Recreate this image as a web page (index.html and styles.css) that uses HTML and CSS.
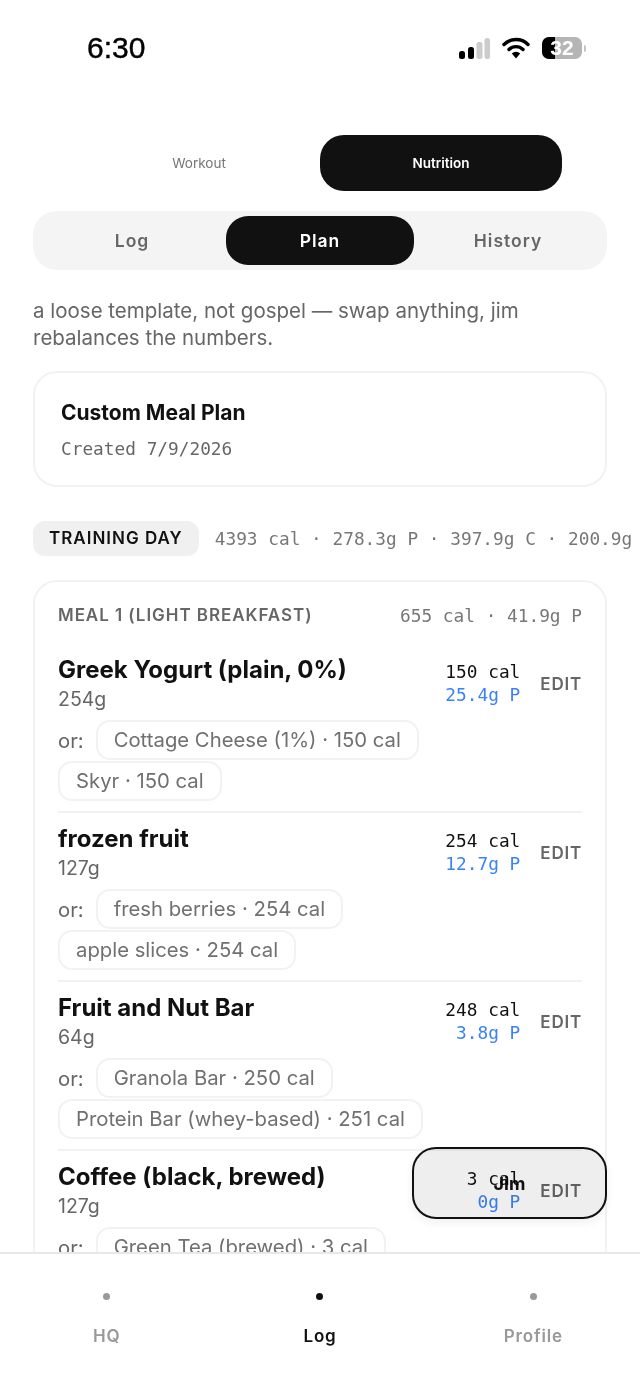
FILE: index.html
```html
<!DOCTYPE html>
<html lang="en">
<head>
    <meta charset="UTF-8">
    <meta name="viewport" content="width=device-width, initial-scale=1.0">
    <title>Nutrition Plan</title>
    <link rel="stylesheet" href="styles.css">
</head>
<body>

<div class="screen">
    <!-- Status bar -->
    <div class="status-bar">
        <span class="status-time">6:30</span>
        <div class="status-icons">
            <svg class="icon-signal" width="31" height="21" viewBox="0 0 31 21">
                <rect x="0" y="13" width="6" height="8" rx="2.5" fill="#000"/>
                <rect x="9" y="9" width="6" height="12" rx="2.5" fill="#000"/>
                <rect x="17.5" y="4" width="6" height="17" rx="2.5" fill="#ccc"/>
                <rect x="25.5" y="0" width="5.5" height="21" rx="2.5" fill="#ccc"/>
            </svg>
            <svg class="icon-wifi" width="28" height="22" viewBox="0 0 28 22">
                <path d="M2 7.5 a17 17 0 0 1 24 0" fill="none" stroke="#000" stroke-width="3.4" stroke-linecap="round"/>
                <path d="M7 12.5 a10 10 0 0 1 14 0" fill="none" stroke="#000" stroke-width="3.4" stroke-linecap="round"/>
                <path d="M9.8 16.4 L14 21.5 L18.2 16.4 a6 6 0 0 0 -8.4 0z" fill="#000"/>
            </svg>
            <div class="battery">
                <div class="battery-body">
                    <div class="battery-fill"></div>
                    <span class="battery-num">32</span>
                </div>
                <div class="battery-cap"></div>
            </div>
        </div>
    </div>

    <main class="content">
        <!-- Workout / Nutrition -->
        <div class="mode-tabs">
            <div class="mode-tab">Workout</div>
            <div class="mode-tab active">Nutrition</div>
        </div>

        <!-- Log / Plan / History -->
        <div class="sub-tabs">
            <div class="sub-tab">Log</div>
            <div class="sub-tab active">Plan</div>
            <div class="sub-tab">History</div>
        </div>

        <p class="intro">a loose template, not gospel — swap anything, jim rebalances the numbers.</p>

        <div class="plan-card">
            <div class="plan-title">Custom Meal Plan</div>
            <div class="plan-date">Created 7/9/2026</div>
        </div>

        <div class="day-row">
            <span class="day-badge">TRAINING DAY</span>
            <span class="day-macros">4393 cal · 278.3g P · 397.9g C · 200.9g F</span>
        </div>

        <div class="meal-card">
            <div class="meal-header">
                <span class="meal-name">MEAL 1 (LIGHT BREAKFAST)</span>
                <span class="meal-macros">655 cal · 41.9g P</span>
            </div>

            <div class="food">
                <div class="food-top">
                    <div class="food-info">
                        <div class="food-name">Greek Yogurt (plain, 0%)</div>
                        <div class="food-amount">254g</div>
                    </div>
                    <div class="food-macros">
                        <div>150 cal</div>
                        <div class="protein">25.4g P</div>
                    </div>
                    <span class="edit">EDIT</span>
                </div>
                <div class="swaps">
                    <span class="swap-label">or:</span>
                    <span class="swap">Cottage Cheese (1%) · 150 cal</span>
                    <span class="swap">Skyr · 150 cal</span>
                </div>
            </div>

            <div class="food">
                <div class="food-top">
                    <div class="food-info">
                        <div class="food-name">frozen fruit</div>
                        <div class="food-amount">127g</div>
                    </div>
                    <div class="food-macros">
                        <div>254 cal</div>
                        <div class="protein">12.7g P</div>
                    </div>
                    <span class="edit">EDIT</span>
                </div>
                <div class="swaps">
                    <span class="swap-label">or:</span>
                    <span class="swap">fresh berries · 254 cal</span>
                    <span class="swap">apple slices · 254 cal</span>
                </div>
            </div>

            <div class="food">
                <div class="food-top">
                    <div class="food-info">
                        <div class="food-name">Fruit and Nut Bar</div>
                        <div class="food-amount">64g</div>
                    </div>
                    <div class="food-macros">
                        <div>248 cal</div>
                        <div class="protein">3.8g P</div>
                    </div>
                    <span class="edit">EDIT</span>
                </div>
                <div class="swaps">
                    <span class="swap-label">or:</span>
                    <span class="swap">Granola Bar · 250 cal</span>
                    <span class="swap">Protein Bar (whey-based) · 251 cal</span>
                </div>
            </div>

            <div class="food">
                <div class="food-top">
                    <div class="food-info">
                        <div class="food-name">Coffee (black, brewed)</div>
                        <div class="food-amount">127g</div>
                    </div>
                    <div class="food-macros">
                        <div>3 cal</div>
                        <div class="protein">0g P</div>
                    </div>
                    <span class="edit">EDIT</span>
                </div>
                <div class="swaps">
                    <span class="swap-label">or:</span>
                    <span class="swap">Green Tea (brewed) · 3 cal</span>
                </div>
            </div>
        </div>
    </main>

    <!-- Floating chat button -->
    <div class="jim-button">Jim</div>

    <!-- Bottom nav -->
    <nav class="bottom-nav">
        <div class="nav-item"><span class="nav-dot"></span>HQ</div>
        <div class="nav-item active"><span class="nav-dot"></span>Log</div>
        <div class="nav-item"><span class="nav-dot"></span>Profile</div>
    </nav>
</div>

</body>
</html>
```

FILE: styles.css
```css
* {
    box-sizing: border-box;
}

body {
    margin: 0;
    background-color: #fff;
    font-family: Inter, "Noto Sans", sans-serif;
    color: #111;
}

.screen {
    position: relative;
    display: flex;
    flex-direction: column;
    width: 640px;
    height: 1387px;
    overflow: hidden;
}

/* Status bar */
.status-bar {
    flex: none;
    display: flex;
    justify-content: space-between;
    align-items: center;
    height: 96px;
    padding: 0 54px 0 87px;
}

.status-time {
    font-family: "Liberation Sans", sans-serif;
    font-size: 30px;
    font-weight: 400;
    color: #000;
    -webkit-text-stroke: 0.4px #000;
}

.status-icons {
    display: flex;
    align-items: center;
    gap: 12px;
}

.battery {
    display: flex;
    align-items: center;
    gap: 2px;
}

.battery-body {
    position: relative;
    width: 40px;
    height: 22px;
    border-radius: 7px;
    background-color: #b5b5b5;
    overflow: hidden;
}

.battery-fill {
    width: 13px;
    height: 100%;
    background-color: #000;
}

.battery-num {
    position: absolute;
    top: 0;
    left: 0;
    width: 100%;
    font-family: "Liberation Sans", sans-serif;
    font-size: 21px;
    font-weight: 700;
    line-height: 22px;
    text-align: center;
    color: #fff;
}

.battery-cap {
    width: 2px;
    height: 7px;
    border-radius: 0 2px 2px 0;
    background-color: #c4c4c4;
}

/* Main scroll area */
.content {
    flex: 1;
    min-height: 0;
    padding: 39px 33px 0;
    overflow: hidden;
}

.mode-tabs {
    display: flex;
    width: 484px;
    margin: 0 auto;
}

.mode-tab {
    flex: 1;
    height: 56px;
    line-height: 56px;
    border-radius: 24px;
    text-align: center;
    font-size: 13.5px;
    color: #777;
}

.mode-tab.active {
    background-color: #111;
    color: #fff;
    font-weight: 600;
}

.sub-tabs {
    display: flex;
    height: 59px;
    margin-top: 20px;
    padding: 5px;
    border-radius: 24px;
    background-color: #f4f4f4;
}

.sub-tab {
    flex: 1;
    border-radius: 22px;
    line-height: 50px;
    text-align: center;
    font-size: 17.5px;
    font-weight: 600;
    letter-spacing: 1px;
    color: #666;
}

.sub-tab.active {
    background-color: #111;
    color: #fff;
}

.intro {
    margin: 27px 0 0;
    font-size: 20.5px;
    line-height: 27px;
    color: #666;
}

.plan-card {
    height: 116px;
    margin-top: 20px;
    padding: 27px 26px;
    border: 2px solid #f2f2f2;
    border-radius: 24px;
}

.plan-title {
    font-size: 21px;
    line-height: 26px;
    font-weight: 700;
}

.plan-date {
    margin-top: 12px;
    font-family: "DejaVu Sans Mono", monospace;
    font-size: 17.8px;
    color: #666;
}

.day-row {
    display: flex;
    align-items: center;
    gap: 16px;
    margin-top: 34px;
    white-space: nowrap;
}

.day-badge {
    flex: none;
    padding: 0 16px;
    height: 35px;
    line-height: 35px;
    border-radius: 12px;
    background-color: #f0f0f0;
    font-size: 17px;
    font-weight: 600;
    letter-spacing: 1px;
}

.day-macros,
.meal-macros {
    font-family: "DejaVu Sans Mono", monospace;
    font-size: 17.8px;
    color: #777;
}

.meal-card {
    margin-top: 24px;
    padding: 20px 23px;
    border: 2px solid #f2f2f2;
    border-radius: 24px;
}

.meal-header {
    display: flex;
    justify-content: space-between;
    align-items: center;
    height: 26px;
    margin-bottom: 16px;
}

.meal-name {
    font-size: 17px;
    font-weight: 600;
    letter-spacing: 0.95px;
    color: #666;
}

.food {
    padding: 10px 0;
    border-bottom: 2px solid #f2f2f2;
}

.food-top {
    display: flex;
    align-items: flex-start;
}

.food-info {
    flex: 1;
}

.food-name {
    font-size: 24px;
    line-height: 32px;
    font-weight: 700;
}

.food-amount {
    font-size: 19.5px;
    line-height: 27px;
    color: #666;
}

.food-macros {
    margin-top: 6px;
    font-family: "DejaVu Sans Mono", monospace;
    font-size: 17.8px;
    line-height: 23px;
    text-align: right;
}

.protein {
    color: #3b82f6;
}

.edit {
    margin: 19px 0 0 20px;
    font-size: 17px;
    line-height: 22px;
    font-weight: 600;
    letter-spacing: 0.8px;
    color: #666;
}

.swaps {
    display: flex;
    flex-wrap: wrap;
    align-items: center;
    gap: 1px 12px;
    margin-top: 7px;
}

.swap-label {
    font-size: 20.3px;
    color: #666;
}

.swap {
    height: 40px;
    padding: 0 16px;
    line-height: 36px;
    border: 2px solid #f2f2f2;
    border-radius: 14px;
    font-size: 20.3px;
    color: #707070;
    white-space: nowrap;
}

/* Floating chat button - the list shows through it */
.jim-button {
    position: absolute;
    top: 1147px;
    left: 412px;
    width: 195px;
    height: 72px;
    line-height: 70px;
    border: 2px solid #111;
    border-radius: 24px;
    background-color: #eee;
    mix-blend-mode: multiply;
    box-shadow: 0 4px 10px rgba(0, 0, 0, 0.06);
    text-align: center;
    font-size: 18px;
    font-weight: 700;
}

/* Bottom nav */
.bottom-nav {
    flex: none;
    display: flex;
    height: 135px;
    border-top: 2px solid #e8e8e8;
    background-color: #fff;
}

.nav-item {
    flex: 1;
    display: flex;
    flex-direction: column;
    align-items: center;
    padding-top: 39px;
    font-size: 17px;
    font-weight: 600;
    letter-spacing: 0.8px;
    color: #999;
}

.nav-dot {
    width: 7px;
    height: 7px;
    margin-bottom: 26px;
    border-radius: 50%;
    background-color: #999;
}

.nav-item.active {
    color: #111;
}

.nav-item.active .nav-dot {
    background-color: #111;
}
```
